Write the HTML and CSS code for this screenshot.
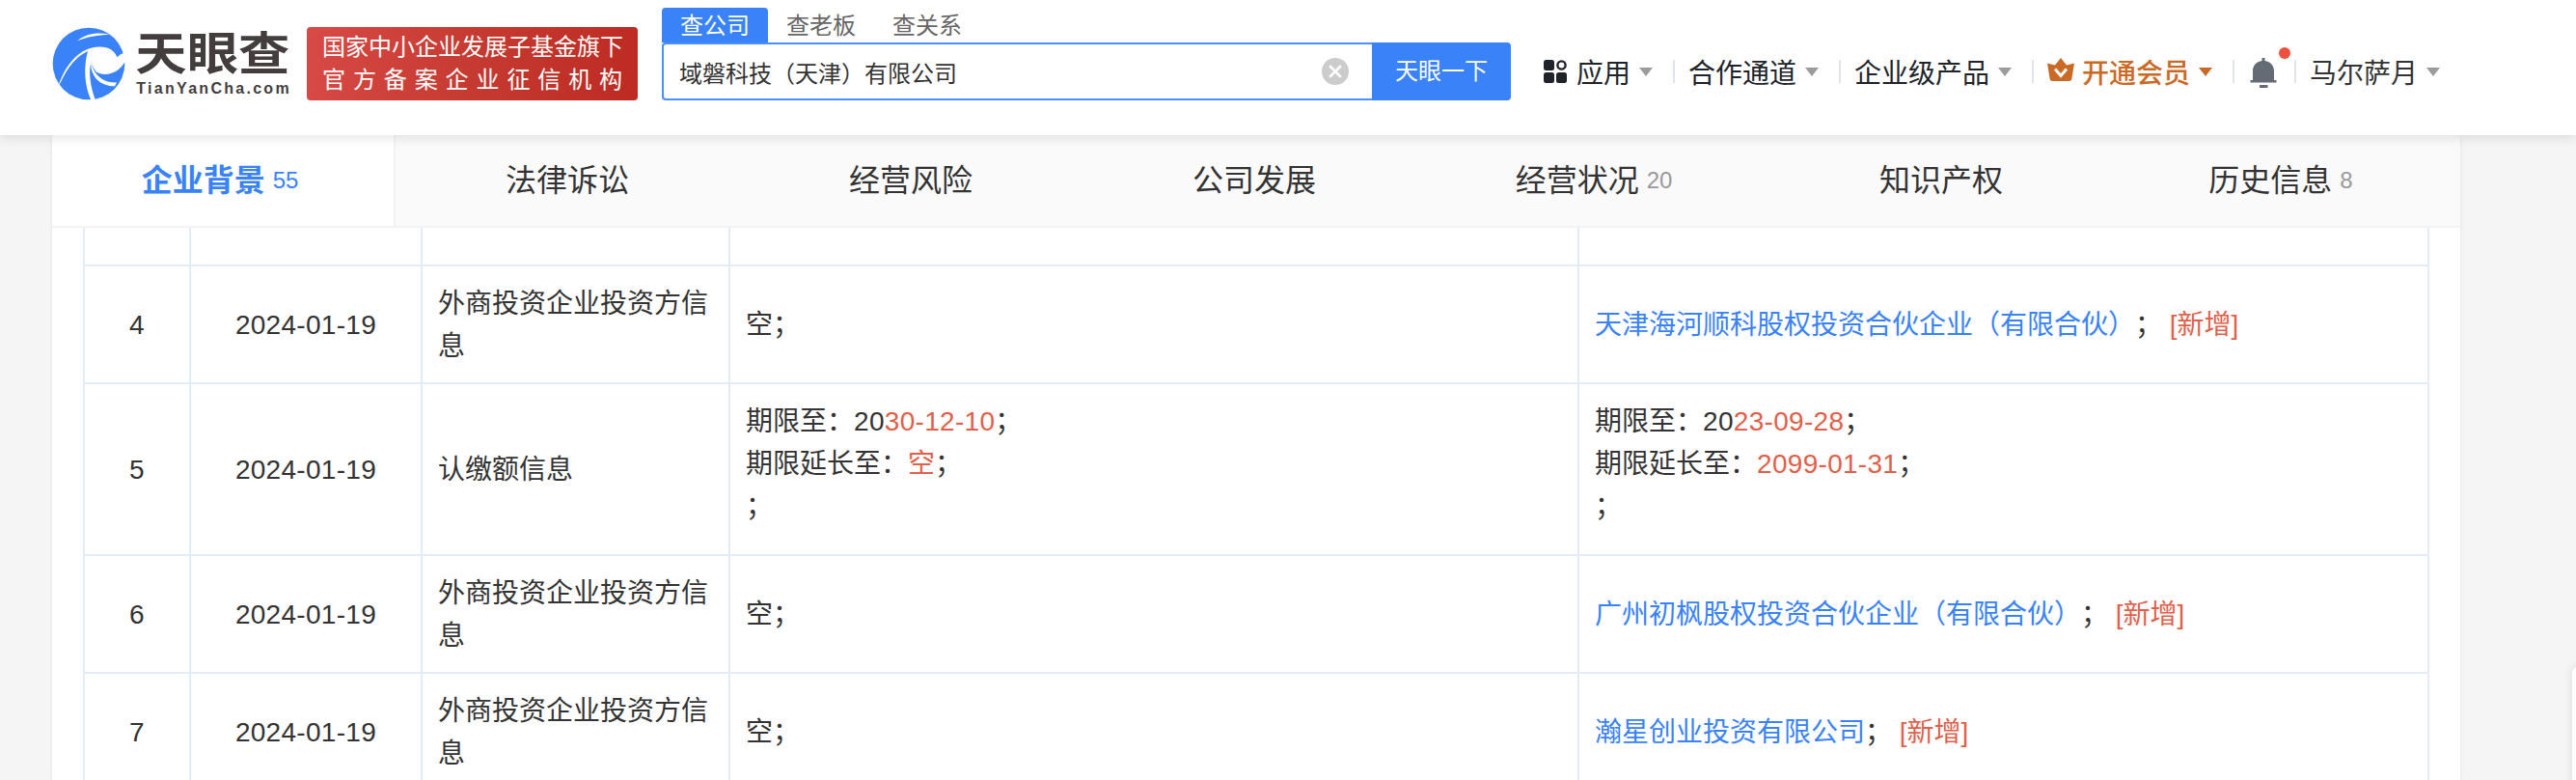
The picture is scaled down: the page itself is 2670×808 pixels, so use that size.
FILE: index.html
```html
<!DOCTYPE html>
<html lang="zh-CN">
<head>
  <meta charset="UTF-8">
  <title>域磐科技（天津）有限公司 - 天眼查</title>
  <link rel="stylesheet" href="styles.css">
</head>
<body>
  <header class="header">
    <a class="logo">
      <svg viewBox="30 39 738 225" width="246" height="75">
        <circle cx="141" cy="153" r="112" fill="#3982f7"/>
        <g fill="#fff">
          <path d="M105 82C133 58 170 54 207 62C170 64 135 69 105 82Z"/>
          <path d="M46 224C66 160 104 116 148 104C190 94 220 106 229 133L240 124L256 118L256 148L250 152C236 176 200 196 166 180C156 170 150 158 148 148C140 180 146 226 162 266L148 266C128 222 124 164 138 114C100 132 76 164 54 210Z"/>
          <path d="M147 140C152 184 184 214 228 211L222 223C178 222 144 196 147 140Z"/>
        </g>
        <text class="logo-cn" x="286" y="171" textLength="480" lengthAdjust="spacingAndGlyphs">天眼查</text>
        <text class="logo-en" x="289" y="246" textLength="475">TianYanCha.com</text>
      </svg>
    </a>
    <div class="badge">
      <p>国家中小企业发展子基金旗下</p>
      <p class="wide">官方备案企业征信机构</p>
    </div>
    <div class="search">
      <div class="search-tabs">
        <span class="on">查公司</span>
        <span>查老板</span>
        <span>查关系</span>
      </div>
      <div class="search-bar">
        <div class="search-input">
          <span>域磐科技（天津）有限公司</span>
          <svg width="28" height="28" viewBox="0 0 28 28"><circle cx="14" cy="14" r="14" fill="#ccc"/><path d="M9 9l10 10M19 9L9 19" stroke="#fff" stroke-width="2.6" stroke-linecap="round"/></svg>
        </div>
        <div class="search-btn">天眼一下</div>
      </div>
    </div>
    <nav class="nav">
      <div class="nav-item">
        <svg class="apps" width="24" height="24" viewBox="0 0 24 24" fill="#20242a"><rect width="11" height="11" rx="2.5"/><rect y="13" width="11" height="11" rx="2.5"/><rect x="13" y="13" width="11" height="11" rx="2.5"/><circle cx="18.5" cy="5.5" r="4.1" fill="none" stroke="#20242a" stroke-width="2.4"/></svg>
        应用<i class="caret"></i>
      </div>
      <div class="nav-item">合作通道<i class="caret"></i></div>
      <div class="nav-item">企业级产品<i class="caret"></i></div>
      <div class="nav-item vip">
        <svg class="crown" width="28" height="24" viewBox="0 0 28 24"><path d="M14 0L20 7.5L28 5.5L25.5 21C25.2 23 24.4 24 22.5 24H5.500C3.600 24 2.800 23 2.500 21L0 5.500L8 7.500Z" fill="#c96a26"/><path d="M8 11.500L14 18.500L20 11.500" fill="none" stroke="#fff" stroke-width="3"/></svg>
        开通会员<i class="caret"></i>
      </div>
      <div class="nav-item bell">
        <svg width="28" height="32" viewBox="0 0 28 32" fill="#646b74"><path d="M12.500 0h3v3C21.500 3.700 25 8 25 13.500V23h2.500v2.500H0.500V23H3v-9.500C3 8 6.500 3.700 12.500 3Z"/><rect x="10" y="28" width="8.500" height="3"/></svg>
        <i class="dot"></i>
      </div>
      <div class="nav-item user">马尔萨月<i class="caret"></i></div>
    </nav>
  </header>

  <main class="container">
    <div class="tabs">
      <div class="tab active"><span>企业背景</span><em>55</em></div>
      <div class="tab"><span>法律诉讼</span></div>
      <div class="tab"><span>经营风险</span></div>
      <div class="tab"><span>公司发展</span></div>
      <div class="tab"><span>经营状况</span><em>20</em></div>
      <div class="tab"><span>知识产权</span></div>
      <div class="tab"><span>历史信息</span><em>8</em></div>
    </div>
    <table class="changes">
      <colgroup>
        <col class="c-no"><col class="c-date"><col class="c-item"><col class="c-before"><col class="c-after">
      </colgroup>
      <tr class="prev"><td></td><td></td><td></td><td></td><td></td></tr>
      <tr>
        <td class="mid">4</td>
        <td class="mid">2024-01-19</td>
        <td>外商投资企业投资方信息</td>
        <td>空；</td>
        <td><a>天津海河顺科股权投资合伙企业（有限合伙）</a>； <b>[新增]</b></td>
      </tr>
      <tr>
        <td class="mid">5</td>
        <td class="mid">2024-01-19</td>
        <td>认缴额信息</td>
        <td><div class="multi">期限至：<span class="num">20<b>30-12-10</b></span>；<br>期限延长至：<b>空</b>；<br>；</div></td>
        <td><div class="multi">期限至：<span class="num">20<b>23-09-28</b></span>；<br>期限延长至：<b class="num">2099-01-31</b>；<br>；</div></td>
      </tr>
      <tr>
        <td class="mid">6</td>
        <td class="mid">2024-01-19</td>
        <td>外商投资企业投资方信息</td>
        <td>空；</td>
        <td><a>广州初枫股权投资合伙企业（有限合伙）</a>； <b>[新增]</b></td>
      </tr>
      <tr>
        <td class="mid">7</td>
        <td class="mid">2024-01-19</td>
        <td>外商投资企业投资方信息</td>
        <td>空；</td>
        <td><a>瀚星创业投资有限公司</a>； <b>[新增]</b></td>
      </tr>
    </table>
  </main>
  <div class="side-bar"></div>
</body>
</html>
```
FILE: styles.css
```css
* { box-sizing: border-box; }
body { margin: 0; height: 808px; overflow: hidden; background: #f5f5f5; color: #333; font-family: "Liberation Sans", "Noto Sans CJK SC", sans-serif; font-size: 28px; text-spacing-trim: space-all; }
p { margin: 0; }
svg { display: block; flex: none; }
em, i { font-style: normal; }

/* header */
.header { position: relative; z-index: 2; display: flex; align-items: flex-start; height: 140px; padding-left: 55px; background: #fff; box-shadow: 0 2px 12px rgba(0,0,0,.12); }
.logo { width: 263px; padding-top: 28px; }
.logo svg { overflow: visible; }
.logo-cn { font: 700 141px "Noto Sans CJK SC", sans-serif; fill: #433e3d; }
.logo-en { font: 700 48px "Liberation Sans", sans-serif; fill: #433e3d; }
.badge { width: 343px; height: 76px; margin: 28px 25px 0 0; padding: 4px 0 0 16px; border-radius: 4px; background: linear-gradient(100deg, #d84a46, #c53a31 50%, #bd2b23); color: #fff; font-size: 24px; line-height: 34px; white-space: nowrap; }
.badge .wide { letter-spacing: 7.9px; }

.search { width: 880px; padding-top: 8px; font-size: 24px; }
.search-tabs { display: flex; }
.search-tabs span { width: 110px; height: 36px; line-height: 37px; text-align: center; color: #666; }
.search-tabs .on { background: #3982f7; color: #fff; border-radius: 4px 4px 0 0; }
.search-bar { display: flex; height: 60px; }
.search-input { display: flex; flex: 1; align-items: center; justify-content: space-between; padding: 0 24px 0 16px; border: 2px solid #4a90ff; border-right: 0; border-radius: 4px 0 0 4px; }
.search-btn { width: 144px; line-height: 60px; background: #3982f7; color: #fff; text-align: center; border-radius: 0 4px 4px 0; }

.nav { display: flex; padding: 54px 0 0 34px; }
.nav-item { display: flex; align-items: center; height: 40px; color: #20242a; white-space: nowrap; }
.nav-item + .nav-item::before { content: ""; flex: none; width: 2px; height: 24px; margin: 0 14px 0 21px; background: #e1e5ea; }
.caret { margin: 0 0 0 9px; border: 7px solid transparent; border-top: 9px solid #9c9c9c; border-bottom: 0; }
.apps { margin-right: 10px; }
.crown { margin: -4px 8px 0 0; }
.vip { color: #c96a26; font-weight: 500; font-family: "Noto Sans CJK SC", sans-serif; }
.vip .caret { border-top-color: #c96a26; }
.bell { position: relative; }
.bell svg { margin: 4px 0 0 2px; }
.dot { position: absolute; left: 69px; top: -5px; width: 12px; height: 12px; border-radius: 50%; background: #ee4f3e; }
.nav-item.user::before { margin-left: 18px; }
.user { color: #333; }

/* content */
.container { width: 2496px; height: 668px; margin-left: 54px; background: #fff; box-shadow: 0 0 4px rgba(0,0,0,.08); }
.tabs { display: flex; height: 96px; background: #fafafa; border-bottom: 2px solid #f3f3f3; }
.tab { display: flex; align-items: center; justify-content: center; width: 356px; font-size: 32px; padding-bottom: 1px; }
.tab span { padding-bottom: 6px; }
.tab em { margin: 0 8px; font-size: 24px; color: #999; }
.tab.active { padding-left: 2px; background: #fff; color: #3982f7; font-weight: 700; border-right: 2px solid #f3f3f3; }
.tab.active em { color: #3982f7; font-weight: 400; }

.changes { width: 2432px; margin-left: 32px; border-spacing: 0; border-left: 2px solid #e4edf6; table-layout: fixed; }
.c-no { width: 110px; }
.c-date { width: 240px; }
.c-item { width: 319px; }
.c-before { width: 880px; }
.c-after { width: 881px; }
.changes td { padding: 17px 16px 15px; line-height: 44px; border-right: 2px solid #e4edf6; border-bottom: 2px solid #e4edf6; }
.changes .prev td { height: 40px; padding: 0; }
.changes .mid { text-align: center; }
.changes .mid, .num { letter-spacing: .3px; }
.changes a { color: #3982f7; }
.changes b { color: #e0604b; font-weight: 400; }
.multi { padding-bottom: 12px; }

.side-bar { position: fixed; left: 2666px; top: 690px; width: 60px; height: 200px; background: #fff; border-radius: 8px; box-shadow: 0 0 10px rgba(0,0,0,.12); }
```
